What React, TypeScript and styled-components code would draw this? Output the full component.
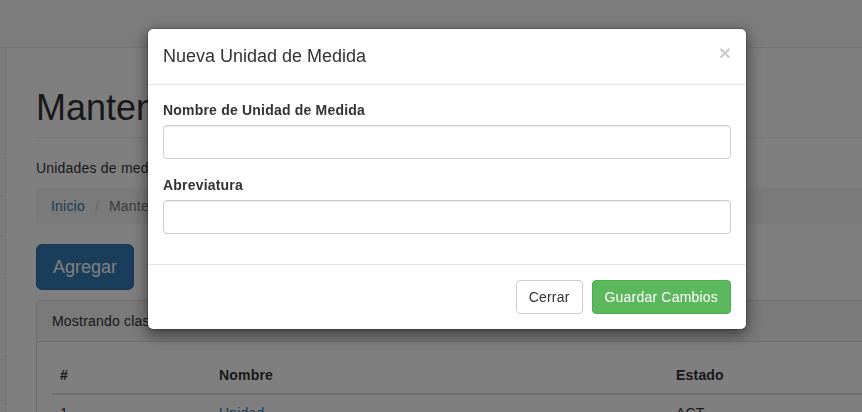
import React from "react";
import styled, { createGlobalStyle } from "styled-components";

const GlobalStyle = createGlobalStyle`
  html, body { margin: 0; padding: 0; overflow: hidden; }
  body {
    font-family: "Liberation Sans", Arial, Helvetica, sans-serif;
    font-size: 14px;
    line-height: 1.42857143;
    letter-spacing: 0.2px;
    color: #333;
    background: #fff;
  }
  * { box-sizing: border-box; }
`;

const Page = styled.div`
  width: 1100px;
  height: 412px;
  overflow: hidden;
`;

const Navbar = styled.div`
  height: 48px;
  background: #f8f8f8;
  border-bottom: 1px solid #e7e7e7;
`;

const Main = styled.div`
  display: flex;
`;

const Sidebar = styled.ul`
  width: 5px;
  margin: 0;
  padding: 0;
  list-style: none;
  background: #f8f8f8;
`;

const SideItem = styled.li<{ $tall?: boolean }>`
  height: ${(p) => (p.$tall ? 66 : 41)}px;
  border-bottom: 1px solid #e7e7e7;
`;

const PageWrapper = styled.div`
  flex: 1;
  border-left: 1px solid #e7e7e7;
  padding: 0 30px;
  min-height: 400px;
`;

const PageHeader = styled.h1`
  margin: 40px 0 20px;
  padding-bottom: 9px;
  border-bottom: 1px solid #eee;
  font-size: 36px;
  font-weight: 500;
  line-height: 1.1;
  letter-spacing: 0;
  color: #333;
`;

const Lead = styled.p`
  margin: 0 0 10px;
`;

const Breadcrumb = styled.ol`
  display: flex;
  gap: 5px;
  margin: 0 0 20px;
  padding: 8px 15px;
  list-style: none;
  background: #f5f5f5;
  border-radius: 4px;
`;

const Crumb = styled.li<{ $active?: boolean }>`
  color: ${(p) => (p.$active ? "#777" : "#337ab7")};
`;

const Sep = styled.li`
  color: #ccc;
  padding: 0 5px;
`;

const PrimaryButton = styled.button`
  display: inline-block;
  height: 46px;
  padding: 10px 16px;
  font-family: inherit;
  font-size: 18px;
  line-height: 1.3333333;
  letter-spacing: 0;
  color: #fff;
  background: #337ab7;
  border: 1px solid #2e6da4;
  border-radius: 6px;
  margin-bottom: 10px;
`;

const Panel = styled.div`
  border: 1px solid #ddd;
  border-radius: 4px;
  background: #fff;
`;

const PanelHeading = styled.div`
  padding: 10px 15px;
  background: #f5f5f5;
  border-bottom: 1px solid #ddd;
  border-radius: 3px 3px 0 0;
`;

const PanelBody = styled.div`
  padding: 15px;
`;

const Table = styled.table`
  width: 100%;
  border-collapse: collapse;
`;

const Th = styled.th<{ $w?: number }>`
  text-align: left;
  padding: 8px;
  line-height: 20px;
  border-bottom: 2px solid #ddd;
  width: ${(p) => (p.$w ? `${p.$w}px` : "auto")};
`;

const Td = styled.td`
  padding: 8px;
  line-height: 20px;
  border-top: 1px solid #ddd;
`;

const Link = styled.a`
  color: #337ab7;
  text-decoration: none;
`;

const Backdrop = styled.div`
  position: fixed;
  inset: 0;
  background: rgba(0, 0, 0, 0.5);
`;

const ModalContent = styled.div`
  position: fixed;
  left: 147px;
  top: 28px;
  width: 600px;
  background: #fff;
  border: 1px solid rgba(0, 0, 0, 0.2);
  border-radius: 6px;
  box-shadow: 0 5px 15px rgba(0, 0, 0, 0.5);
  background-clip: padding-box;
`;

const ModalHeader = styled.div`
  display: flex;
  justify-content: space-between;
  align-items: flex-start;
  padding: 15px;
  border-bottom: 1px solid #e5e5e5;
`;

const ModalTitle = styled.h4`
  margin: 0;
  font-size: 18px;
  font-weight: 500;
  line-height: 25px;
  letter-spacing: 0;
  color: #333;
`;

const CloseButton = styled.button`
  margin-top: -2px;
  padding: 0;
  border: 0;
  background: transparent;
  font-family: inherit;
  font-size: 21px;
  font-weight: 700;
  line-height: 1;
  color: #000;
  opacity: 0.2;
  text-shadow: 0 1px 0 #fff;
`;

const ModalBody = styled.div`
  padding: 15px 15px 14px;
`;

const FormGroup = styled.div`
  margin-bottom: 16px;
`;

const Label = styled.label`
  display: block;
  margin-bottom: 5px;
  font-weight: 700;
  line-height: 20px;
`;

const Input = styled.input`
  display: block;
  width: 100%;
  height: 34px;
  padding: 6px 12px;
  font-family: inherit;
  font-size: 14px;
  color: #555;
  background: #fff;
  border: 1px solid #ccc;
  border-radius: 4px;
  box-shadow: inset 0 1px 1px rgba(0, 0, 0, 0.075);
  outline: none;
`;

const ModalFooter = styled.div`
  display: flex;
  justify-content: flex-end;
  gap: 9px;
  padding: 15px;
  border-top: 1px solid #e5e5e5;
`;

const Btn = styled.button<{ $variant: "default" | "success" }>`
  height: 34px;
  padding: 6px 12px;
  font-family: inherit;
  font-size: 14px;
  line-height: 1.42857143;
  letter-spacing: 0.2px;
  border-radius: 4px;
  border: 1px solid ${(p) => (p.$variant === "success" ? "#4cae4c" : "#ccc")};
  background: ${(p) => (p.$variant === "success" ? "#5cb85c" : "#fff")};
  color: ${(p) => (p.$variant === "success" ? "#fff" : "#333")};
`;

export default function App() {
  return (
    <>
      <GlobalStyle />
      <Page>
        <Navbar />
        <Main>
          <Sidebar>
            <SideItem $tall />
            {Array.from({ length: 8 }).map((_, i) => (
              <SideItem key={i} />
            ))}
          </Sidebar>
          <PageWrapper>
            <PageHeader>Mantenimiento de Unidades de Medida</PageHeader>
            <Lead>Unidades de medida registradas en el sistema</Lead>
            <Breadcrumb>
              <Crumb>Inicio</Crumb>
              <Sep>/</Sep>
              <Crumb $active>Mantenimiento de Unidades de Medida</Crumb>
            </Breadcrumb>
            <PrimaryButton>Agregar</PrimaryButton>
            <Panel>
              <PanelHeading>Mostrando clases de unidades de medida</PanelHeading>
              <PanelBody>
                <Table>
                  <thead>
                    <tr>
                      <Th $w={159}>#</Th>
                      <Th $w={457}>Nombre</Th>
                      <Th>Estado</Th>
                    </tr>
                  </thead>
                  <tbody>
                    <tr>
                      <Td>1</Td>
                      <Td>
                        <Link href="#">Unidad</Link>
                      </Td>
                      <Td>ACT</Td>
                    </tr>
                  </tbody>
                </Table>
              </PanelBody>
            </Panel>
          </PageWrapper>
        </Main>
      </Page>
      <Backdrop />
      <ModalContent>
        <ModalHeader>
          <ModalTitle>Nueva Unidad de Medida</ModalTitle>
          <CloseButton>×</CloseButton>
        </ModalHeader>
        <ModalBody>
          <FormGroup>
            <Label>Nombre de Unidad de Medida</Label>
            <Input />
          </FormGroup>
          <FormGroup>
            <Label>Abreviatura</Label>
            <Input />
          </FormGroup>
        </ModalBody>
        <ModalFooter>
          <Btn $variant="default">Cerrar</Btn>
          <Btn $variant="success">Guardar Cambios</Btn>
        </ModalFooter>
      </ModalContent>
    </>
  );
}
